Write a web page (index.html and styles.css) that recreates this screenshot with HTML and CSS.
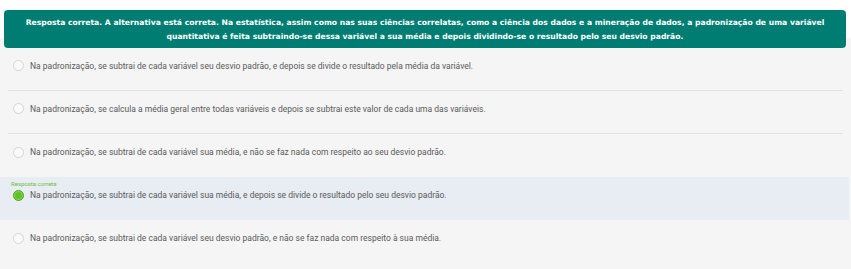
FILE: index.html
```html
<!DOCTYPE html>
<html>
	<head>
		<meta charset="utf-8" />
		<title>Resposta</title>
		<link rel="stylesheet" href="styles.css">
	</head>
	<body>
		<div class="top">
			<div class="banner">
				Resposta correta. A alternativa está correta. Na estatística, assim como nas suas ciências correlatas, como a ciência dos dados e a mineração de dados, a padronização de uma variável quantitativa é feita subtraindo-se dessa variável a sua média e depois dividindo-se o resultado pelo seu desvio padrão.
			</div>
		</div>
		<div class="options">
			<div class="option sep">
				<span class="radio"></span>
				<span class="text">Na padronização, se subtrai de cada variável seu desvio padrão, e depois se divide o resultado pela média da variável.</span>
			</div>
			<div class="option sep">
				<span class="radio"></span>
				<span class="text">Na padronização, se calcula a média geral entre todas variáveis e depois se subtrai este valor de cada uma das variáveis.</span>
			</div>
			<div class="option">
				<span class="radio"></span>
				<span class="text">Na padronização, se subtrai de cada variável sua média, e não se faz nada com respeito ao seu desvio padrão.</span>
			</div>
			<div class="option correct">
				<div class="label">Resposta correta</div>
				<div class="row">
					<span class="radio checked"></span>
					<span class="text">Na padronização, se subtrai de cada variável sua média, e depois se divide o resultado pelo seu desvio padrão.</span>
				</div>
			</div>
			<div class="option">
				<span class="radio"></span>
				<span class="text">Na padronização, se subtrai de cada variável seu desvio padrão, e não se faz nada com respeito à sua média.</span>
			</div>
		</div>
	</body>
</html>
```

FILE: styles.css
```css
* {
	padding: 0px;
	margin: 0px;
	box-sizing: border-box;
}

body {
	background-color: #f5f5f5;
	font-family: Roboto, "Liberation Sans", sans-serif;
}

.top {
	background-color: #fff;
	height: 38px;
	padding: 10px 5px 0 4px;
}

.banner {
	height: 38px;
	padding: 6px 8px 0;
	background-color: #007d73;
	border-radius: 4px;
	color: #fff;
	font-family: "DejaVu Sans", sans-serif;
	font-weight: bold;
	font-size: 7.65px;
	line-height: 14px;
	text-align: center;
}

.options {
	margin-top: 10px;
}

.option {
	display: flex;
	align-items: center;
	height: 43px;
	margin: 0 8px;
	padding: 0 0 7px 5px;
	font-size: 8.5px;
	color: #5a5a5a;
}

.option.sep {
	border-bottom: 1px solid #e2e2e2;
}

.radio {
	width: 11px;
	height: 11px;
	margin-right: 6px;
	flex-shrink: 0;
	border: 1px solid #d4d4d4;
	border-radius: 50%;
	background-color: #fafafa;
}

.radio.checked {
	border: 1px solid #4fa51e;
	background-color: #62c12b;
	box-shadow: inset 0 0 0 1px #8ad95c;
}

.option.correct {
	display: block;
	margin: 0 2px 0 0;
	padding: 3px 0 0 11px;
	background-color: #e8ecf3;
}

.label {
	font-size: 6px;
	line-height: 8px;
	color: #6cc03a;
}

.row {
	display: flex;
	align-items: center;
	height: 14px;
	padding-left: 2px;
}
```
